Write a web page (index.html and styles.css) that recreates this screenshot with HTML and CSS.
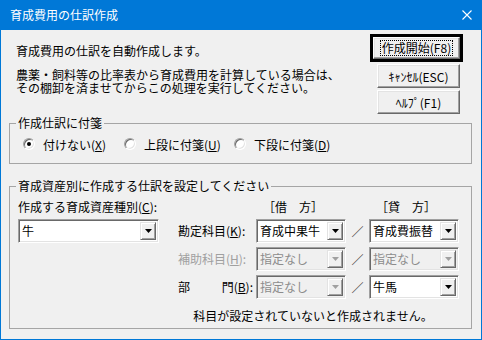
FILE: index.html
```html
<!DOCTYPE html>
<html>
<head>
    <title>育成費用の仕訳作成</title>
    <link rel="stylesheet" href="styles.css">
</head>
<body>
    <div class="window">
        <div class="titlebar">
            <span class="title">育成費用の仕訳作成</span>
            <svg class="close" width="10" height="10" viewBox="0 0 10 10">
                <path d="M0.5 0.5 L9.5 9.5 M9.5 0.5 L0.5 9.5" stroke="#fff" stroke-width="1.1" fill="none"/>
            </svg>
        </div>
        <div class="client">
            <div class="top">
                <div class="intro">
                    <p class="lead">育成費用の仕訳を自動作成します。</p>
                    <p class="note">農薬・飼料等の比率表から育成費用を計算している場合は、<br>その棚卸を済ませてからこの処理を実行してください。</p>
                </div>
                <div class="buttons">
                    <div class="default-frame">
                        <button class="btn btn-default"><span class="focus">作成開始(F8)</span></button>
                    </div>
                    <button class="btn">ｷｬﾝｾﾙ(ESC)</button>
                    <button class="btn">ﾍﾙﾌﾟ(F1)</button>
                </div>
            </div>

            <fieldset class="group tag-group">
                <legend>作成仕訳に付箋</legend>
                <div class="radios">
                    <label class="radio"><span class="radio-box checked"></span><span>付けない(<u>X</u>)</span></label>
                    <label class="radio"><span class="radio-box"></span><span>上段に付箋(<u>U</u>)</span></label>
                    <label class="radio"><span class="radio-box"></span><span>下段に付箋(<u>D</u>)</span></label>
                </div>
            </fieldset>

            <fieldset class="group asset-group">
                <legend>育成資産別に作成する仕訳を設定してください</legend>
                <div class="asset-grid">
                    <div class="kind-label">作成する育成資産種別(<u>C</u>):</div>
                    <div class="side-head">［借　方］</div>
                    <div class="side-head side-credit">［貸　方］</div>

                    <div class="combo"><span class="value">牛</span><span class="drop"><svg width="7" height="4"><polygon points="0,0 7,0 3.5,4" fill="#000"/></svg></span></div>
                    <div class="row-label">勘定科目(<u>K</u>):</div>
                    <div class="combo"><span class="value">育成中果牛</span><span class="drop"><svg width="7" height="4"><polygon points="0,0 7,0 3.5,4" fill="#000"/></svg></span></div>
                    <div class="slash">／</div>
                    <div class="combo"><span class="value">育成費振替</span><span class="drop"><svg width="7" height="4"><polygon points="0,0 7,0 3.5,4" fill="#000"/></svg></span></div>

                    <div class="row-label disabled row-2">補助科目(<u>H</u>):</div>
                    <div class="combo disabled"><span class="value">指定なし</span><span class="drop"><svg width="7" height="4"><polygon points="0,0 7,0 3.5,4" fill="#a0a0a0"/></svg></span></div>
                    <div class="slash">／</div>
                    <div class="combo disabled"><span class="value">指定なし</span><span class="drop"><svg width="7" height="4"><polygon points="0,0 7,0 3.5,4" fill="#a0a0a0"/></svg></span></div>

                    <div class="row-label split row-3"><span>部</span><span>門(<u>B</u>):</span></div>
                    <div class="combo disabled"><span class="value">指定なし</span><span class="drop"><svg width="7" height="4"><polygon points="0,0 7,0 3.5,4" fill="#a0a0a0"/></svg></span></div>
                    <div class="slash">／</div>
                    <div class="combo"><span class="value">牛馬</span><span class="drop"><svg width="7" height="4"><polygon points="0,0 7,0 3.5,4" fill="#000"/></svg></span></div>

                    <div class="warning">科目が設定されていないと作成されません。</div>
                </div>
            </fieldset>
        </div>
    </div>
</body>
</html>
```

FILE: styles.css
```css
body {
    margin: 0;
    font-family: "Noto Sans CJK JP", sans-serif;
    font-size: 12px;
    color: #000;
}
.window {
    width: 482px;
    height: 340px;
    box-sizing: border-box;
    border: 1px solid #0078d7;
    border-top: 0;
    background-color: #f0f0f0;
    display: flex;
    flex-direction: column;
}
.titlebar {
    height: 30px;
    flex: none;
    background-color: #0078d7;
    color: #fff;
    display: flex;
    justify-content: space-between;
    align-items: center;
    padding: 0 9px;
}
.title {
    line-height: 14px;
}
.client {
    flex: 1;
    display: flex;
    flex-direction: column;
}
.top {
    display: flex;
    justify-content: space-between;
}
.intro {
    padding: 14px 0 0 15px;
}
.lead {
    margin: 0;
    line-height: 13px;
}
.note {
    margin: 11px 0 0;
    line-height: 13px;
}
.buttons {
    width: 93px;
    margin: 4px 18px 0 0;
    display: flex;
    flex-direction: column;
    align-items: flex-end;
}
.btn {
    font: inherit;
    color: #000;
    width: 83px;
    height: 24px;
    margin: 2px 3px 0 0;
    padding: 0;
    background-color: #f0f0f0;
    border: 1px solid;
    border-color: #fff #696969 #696969 #fff;
    box-shadow: inset -1px -1px #a0a0a0, inset 1px 1px #e3e3e3;
}
.default-frame {
    border: 3px solid #000;
    width: 87px;
    height: 22px;
}
.btn-default {
    width: 87px;
    height: 22px;
    margin: 0;
    display: flex;
    align-items: center;
    justify-content: center;
}
.focus {
    outline: 1px dotted #000;
    outline-offset: 0;
    padding: 0 1px;
    line-height: 14px;
}
.group {
    margin: 2px 9px 0 8px;
    padding: 0;
    border: 1px solid #a5a5a5;
    min-width: 0;
}
.group legend {
    margin-left: 6px;
    padding: 0 2px;
    line-height: 14px;
}
.asset-group {
    margin-top: 15px;
}
.radios {
    display: grid;
    grid-template-columns: 101px 110px auto;
    padding: 7px 0 12px 13px;
}
.radio {
    display: flex;
    align-items: center;
    gap: 8px;
    height: 14px;
    white-space: nowrap;
}
.radio-box {
    flex: none;
    width: 12px;
    height: 12px;
    box-sizing: border-box;
    border-radius: 50%;
    border: 1px solid;
    border-color: #a0a0a0 #fff #fff #a0a0a0;
    background-color: #fff;
    box-shadow: inset 1px 1px #696969, inset -1px -1px #e3e3e3;
    display: flex;
    align-items: center;
    justify-content: center;
}
.radio-box.checked::after {
    content: "";
    width: 4px;
    height: 4px;
    border-radius: 50%;
    background-color: #000;
}
.asset-grid {
    display: grid;
    grid-template-columns: 141px 97px 90px 23px 90px;
    grid-template-rows: 16px 24px 24px 24px auto;
    row-gap: 4px;
    padding: 6px 0 6px 8px;
    align-items: center;
}
.kind-label {
    grid-column: 1 / 3;
    line-height: 14px;
}
.side-head {
    grid-column: 3;
    padding-left: 7px;
    line-height: 14px;
}
.side-credit {
    grid-column: 5;
}
.row-label {
    padding-left: 19px;
    line-height: 14px;
}
.row-2 {
    grid-column: 2;
}
.row-3 {
    grid-column: 2;
}
.row-label.split {
    display: flex;
    justify-content: space-between;
    width: 75px;
}
.row-label.disabled {
    color: #a0a0a0;
}
.combo {
    height: 24px;
    box-sizing: border-box;
    display: flex;
    padding: 2px;
    border: 1px solid;
    border-color: #a0a0a0 #fff #fff #a0a0a0;
    box-shadow: inset 1px 1px #696969, inset -1px -1px #e3e3e3;
    background-color: #fff;
}
.combo .value {
    flex: 1;
    padding: 1px 1px 0;
    line-height: 15px;
}
.combo .drop {
    width: 16px;
    box-sizing: border-box;
    border: 1px solid;
    border-color: #e3e3e3 #696969 #696969 #e3e3e3;
    box-shadow: inset 1px 1px #fff, inset -1px -1px #a0a0a0;
    background-color: #f0f0f0;
    display: flex;
    align-items: center;
    justify-content: center;
}
.combo .drop svg {
    display: block;
}
.combo.disabled {
    background-color: #f0f0f0;
    color: #8c8c8c;
}
.slash {
    text-align: center;
    color: #404040;
}
.warning {
    grid-column: 2 / 6;
    text-align: center;
    line-height: 13px;
    margin-top: 6px;
    padding-left: 8px;
}
```
